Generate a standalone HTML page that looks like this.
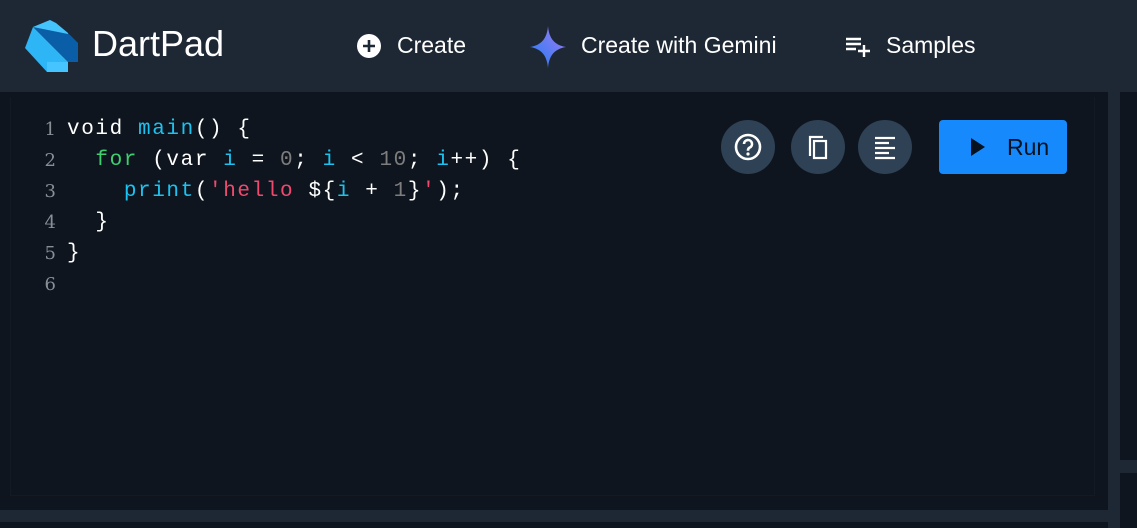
<!DOCTYPE html>
<html><head><meta charset="utf-8"><style>
*{margin:0;padding:0;box-sizing:border-box}
body{width:1137px;height:528px;background:#0e151e;font-family:"Liberation Sans",sans-serif;position:relative;overflow:hidden}
.hdr{position:absolute;left:0;top:0;width:1137px;height:92px;background:#1e2835}
.title{position:absolute;left:92px;top:23px;color:#fff;font-size:36px}
.nav{position:absolute;top:32px;color:#fff;font-size:23px}
.vdiv{position:absolute;left:1108px;top:92px;width:12px;height:436px;background:#1d2834}
.hdiv{position:absolute;left:0;top:510px;width:1108px;height:12px;background:#1d2834}
.rdiv{position:absolute;left:1120px;top:460px;width:17px;height:13px;background:#1d2834}
.ed{position:absolute;left:10px;top:97px;width:1085px;height:399px;border-left:1px solid #121a24;border-bottom:1px solid #121a24;border-right:1px solid #121a24}
.code{position:absolute;left:67px;top:114px;font-family:"Liberation Mono",monospace;font-size:21px;letter-spacing:1.6px;line-height:31px;color:#fff;white-space:pre}
.ln{position:absolute;left:40px;top:114px;font-family:"DejaVu Serif",serif;font-size:18px;line-height:31px;color:#8a8f96;text-align:right;width:16px}
.b{color:#1cc2f0}.g{color:#3ecf6e}.n{color:#7d7d7d}.s{color:#ef4a6e}
.cb{position:absolute;top:120px;width:54px;height:54px;border-radius:50%;background:#2e4155}
.run{position:absolute;left:939px;top:120px;width:128px;height:54px;background:#168afc;border-radius:4px;color:#06121f;font-size:23px}
</style></head><body>
<div class="hdr">
<svg style="position:absolute;left:0;top:0" width="90" height="90" viewBox="0 0 90 90">
<polygon points="33,27 50,20 68,33 78,43 78,62 68,62" fill="#0a5ea8"/>
<polygon points="33,27 68,62 68,72 47,72 25,48" fill="#2db5f6"/>
<polygon points="33,27 50,20 56,23 68,33 68,34" fill="#45c3fb"/>
<polygon points="47,62 68,62 68,72 47,72" fill="#45c4ff"/>
</svg>
<div class="title">DartPad</div>
<svg style="position:absolute;left:356px;top:33px" width="26" height="26" viewBox="0 0 26 26"><circle cx="13" cy="13" r="12" fill="#fff"/><path d="M13 7v12M7 13h12" stroke="#1e2835" stroke-width="2.6"/></svg>
<div class="nav" style="left:397px">Create</div>
<svg style="position:absolute;left:530px;top:26px" width="36" height="42" viewBox="0 0 36 42"><defs><linearGradient id="gg" x1="0" y1="1" x2="1" y2="0"><stop offset="0" stop-color="#1a7cf5"/><stop offset="1" stop-color="#a67df0"/></linearGradient></defs><path d="M18 0C19 12 24 19 36 21C24 23 19 30 18 42C17 30 12 23 0 21C12 19 17 12 18 0Z" fill="url(#gg)"/></svg>
<div class="nav" style="left:581px">Create with Gemini</div>
<svg style="position:absolute;left:845px;top:36px" width="26" height="22" viewBox="0 0 26 22"><path d="M1 3h15M1 8h15M1 13h10M19 9v12M13 15h12" stroke="#fff" stroke-width="2.4"/></svg>
<div class="nav" style="left:886px">Samples</div>
</div>
<div class="ed"></div>
<div class="ln">1<br>2<br>3<br>4<br>5<br>6</div>
<div class="code">void <span class="b">main</span>() {
  <span class="g">for</span> (var <span class="b">i</span> = <span class="n">0</span>; <span class="b">i</span> &lt; <span class="n">10</span>; <span class="b">i</span>++) {
    <span class="b">print</span>(<span class="s">'hello </span>${<span class="b">i</span> + <span class="n">1</span>}<span class="s">'</span>);
  }
}</div>
<div class="cb" style="left:721px"><svg width="54" height="54" viewBox="0 0 54 54"><circle cx="27" cy="27" r="12" fill="none" stroke="#fff" stroke-width="2.6"/><path d="M23 24a4 4 0 1 1 5.5 3.7c-1.2.6-1.5 1.3-1.5 3" fill="none" stroke="#fff" stroke-width="2.6"/><circle cx="27" cy="34" r="1.6" fill="#fff"/></svg></div>
<div class="cb" style="left:791px"><svg width="54" height="54" viewBox="0 0 54 54"><path d="M19 36V17h13" fill="none" stroke="#fff" stroke-width="2.2"/><rect x="23" y="21" width="12" height="17" fill="none" stroke="#fff" stroke-width="2.2"/></svg></div>
<div class="cb" style="left:858px"><svg width="54" height="54" viewBox="0 0 54 54"><path d="M17 18h20M17 23h14M17 28h20M17 33h14M17 38h20" stroke="#fff" stroke-width="2.2"/></svg></div>
<div class="run"><svg style="position:absolute;left:30px;top:17px" width="18" height="20" viewBox="0 0 18 20"><path d="M2 1L16 10L2 19Z" fill="#06121f"/></svg><span style="position:absolute;left:68px;top:14px">Run</span></div>
<div class="vdiv"></div>
<div class="hdiv"></div>
<div class="rdiv"></div>
</body></html>
